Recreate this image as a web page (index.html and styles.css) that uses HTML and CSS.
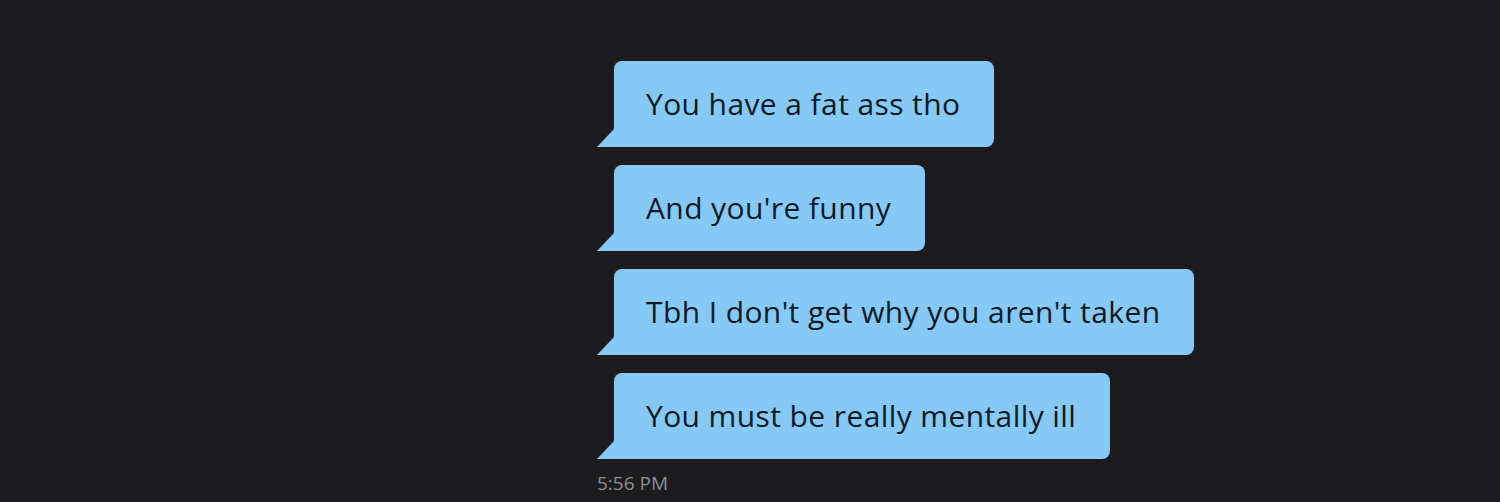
FILE: index.html
```html
<!DOCTYPE html>
<html lang="en">

<head>
    <meta charset="UTF-8" />
    <meta name="viewport" content="width=device-width, initial-scale=1.0" />
    <title>Messages</title>
    <link rel="stylesheet" href="styles.css">
</head>

<body>
    <div class="conversa">
        <div class="balao">You have a fat ass tho</div>
        <div class="balao">And you're funny</div>
        <div class="balao">Tbh I don't get why you aren't taken</div>
        <div class="balao">You must be really mentally ill</div>
        <div class="hora">5:56 PM</div>
    </div>
</body>

</html>
```

FILE: styles.css
```css
body {
    margin: 0;
    background-color: #1c1b1e;
    font-family: 'Open Sans', 'Noto Sans', sans-serif;
    height: 502px;
    overflow: hidden;
}

.conversa {
    display: flex;
    flex-direction: column;
    align-items: flex-start;
    gap: 18px;
    padding: 61px 0 0 614px;
}

.balao {
    position: relative;
    background-color: #87c9f5;
    color: #101a26;
    font-size: 30px;
    font-weight: 500;
    letter-spacing: 0.4px;
    line-height: 38px;
    padding: 24px 34px 24px 32px;
    border-radius: 8px 8px 8px 0;
}

.balao::before {
    content: "";
    position: absolute;
    left: -17px;
    bottom: 0;
    border-bottom: 18px solid #87c9f5;
    border-left: 17px solid transparent;
}

.hora {
    margin: -6px 0 0 -17px;
    color: #8f8f94;
    font-size: 19px;
    line-height: 24px;
}
```
